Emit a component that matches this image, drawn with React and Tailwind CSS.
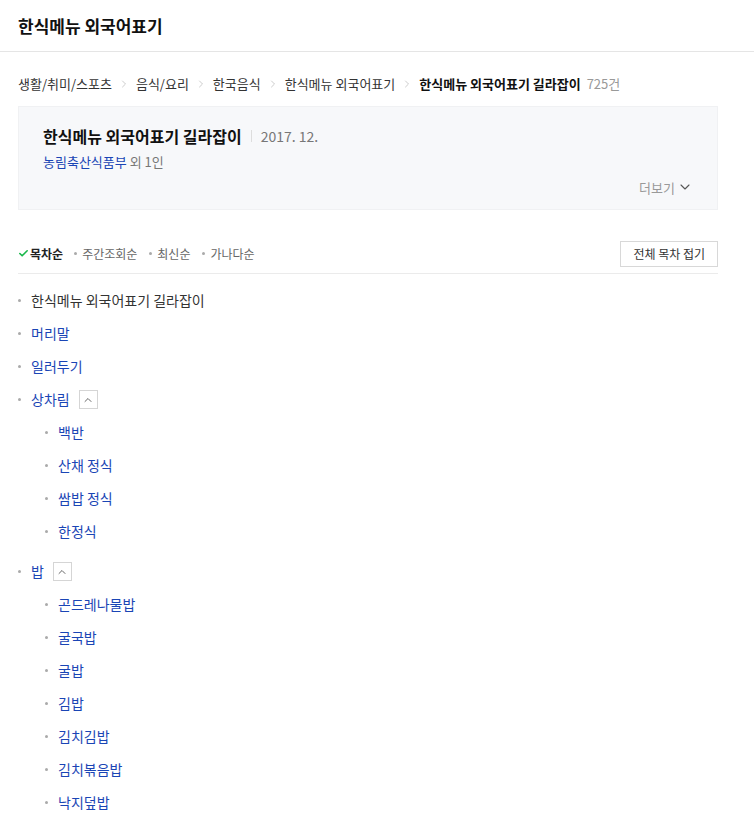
import { Check, ChevronDown, ChevronRight, ChevronUp } from "lucide-react";

const font = { fontFamily: '"Noto Sans CJK KR", "Noto Sans", sans-serif' };

const crumbs = ["생활/취미/스포츠", "음식/요리", "한국음식", "한식메뉴 외국어표기"];

const toc = [
    { title: "한식메뉴 외국어표기 길라잡이", plain: true },
    { title: "머리말" },
    { title: "일러두기" },
    { title: "상차림", children: ["백반", "산채 정식", "쌈밥 정식", "한정식"] },
    {
        title: "밥",
        children: ["곤드레나물밥", "굴국밥", "굴밥", "김밥", "김치김밥", "김치볶음밥", "낙지덮밥"],
    },
];

function Dot() {
    return <span className="inline-block w-[3px] h-[3px] bg-[#aaa] rounded-full" />;
}

function Row({ text, plain, sub, toggle }) {
    return (
        <div className={`flex items-center h-[33px] ${sub ? "pl-[27px]" : "pl-0"}`}>
            <Dot />
            <span className={`ml-[10px] text-[14px] ${plain ? "text-[#333]" : "text-[#1a45b5]"}`}>{text}</span>
            {toggle && (
                <span className="ml-[9px] w-[19px] h-[19px] border border-[#d5d5d5] flex items-center justify-center">
                    <ChevronUp className="w-[12px] h-[12px] text-[#666]" strokeWidth={2} />
                </span>
            )}
        </div>
    );
}

export default function App() {
    return (
        <div className="bg-white min-h-screen w-[754px]" style={font}>
            {/* 상단 헤더 */}
            <div className="h-[52px] border-b border-[#e5e5e5] flex items-center px-[18px]">
                <h1 className="text-[17px] font-bold text-[#111]">한식메뉴 외국어표기</h1>
            </div>

            <div className="px-[18px] w-[736px]">
                {/* 경로 */}
                <div className="flex items-center h-[20px] mt-[22px] text-[13px] text-[#333]">
                    {crumbs.map((c) => (
                        <span key={c} className="flex items-center">
                            {c}
                            <ChevronRight className="w-[12px] h-[12px] mx-[6px] text-[#bbb]" strokeWidth={1.5} />
                        </span>
                    ))}
                    <span className="font-bold text-[#111]">한식메뉴 외국어표기 길라잡이</span>
                    <span className="ml-[6px] text-[#999]">725건</span>
                </div>

                {/* 책 정보 */}
                <div className="mt-[12px] h-[104px] bg-[#f7f8fa] border border-[#f0f1f3] px-[24px] pt-[17px] relative">
                    <div className="flex items-center">
                        <span className="text-[16px] font-bold text-[#111]">한식메뉴 외국어표기 길라잡이</span>
                        <span className="mx-[9px] w-px h-[12px] bg-[#ddd]" />
                        <span className="text-[14px] text-[#777]">2017. 12.</span>
                    </div>
                    <div className="mt-[4px] text-[13px]">
                        <span className="text-[#1a45b5]">농림축산식품부</span>
                        <span className="text-[#777]"> 외 1인</span>
                    </div>
                    <div className="absolute right-[24px] bottom-[12px] flex items-center text-[13px] text-[#999]">
                        더보기
                        <ChevronDown className="w-[16px] h-[16px] ml-[2px] text-[#555]" strokeWidth={1.6} />
                    </div>
                </div>

                {/* 정렬 */}
                <div className="mt-[30px] flex items-center justify-between h-[27px]">
                    <div className="flex items-center text-[12px] text-[#666]">
                        <Check className="w-[11px] h-[11px] text-[#19b84a]" strokeWidth={3.5} />
                        <span className="ml-[1px] font-bold text-[#222]">목차순</span>
                        <span className="ml-[11px] flex items-center gap-[5px]"><Dot />주간조회순</span>
                        <span className="ml-[12px] flex items-center gap-[5px]"><Dot />최신순</span>
                        <span className="ml-[12px] flex items-center gap-[5px]"><Dot />가나다순</span>
                    </div>
                    <button className="h-[26px] px-[12px] border border-[#d8d8d8] text-[12px] text-[#333] bg-white">
                        전체 목차 접기
                    </button>
                </div>
                <div className="mt-[6px] border-b border-[#ebebeb]" />

                {/* 목차 */}
                <div className="pt-[10px]">
                    {toc.map((item) => (
                        <div key={item.title} className={item.children ? "mb-[7px]" : ""}>
                            <Row text={item.title} plain={item.plain} toggle={!!item.children} />
                            {item.children &&
                                item.children.map((c) => <Row key={c} text={c} sub />)}
                        </div>
                    ))}
                </div>
            </div>
        </div>
    );
}
